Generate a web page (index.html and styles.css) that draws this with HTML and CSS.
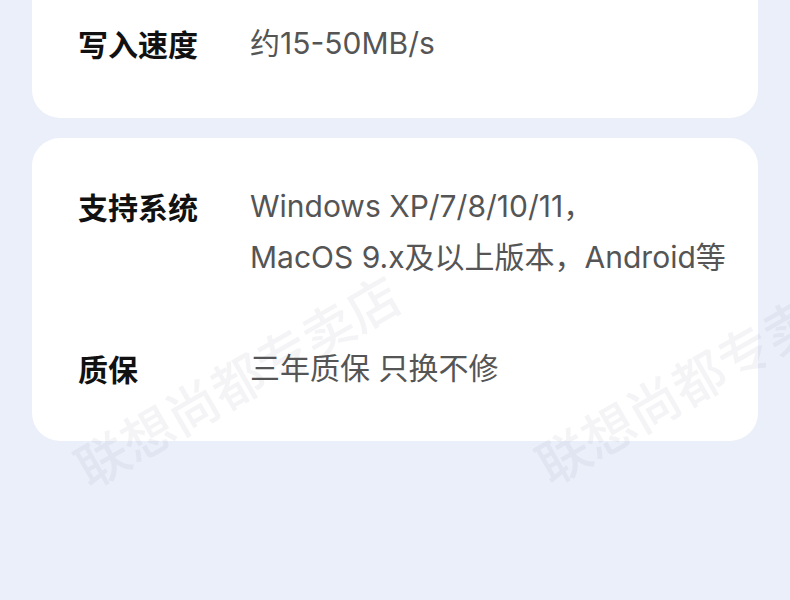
FILE: index.html
```html
<!DOCTYPE html>
<html lang="zh">
<head>
<meta charset="utf-8">
<link rel="stylesheet" href="styles.css">
</head>
<body>
<div class="page">
  <section class="card card-first">
    <div class="row">
      <div class="label">写入速度</div>
      <div class="value">约15-50MB/s</div>
    </div>
  </section>
  <section class="card">
    <div class="row">
      <div class="label">支持系统</div>
      <div class="value">Windows XP/7/8/10/11，<br>MacOS 9.x及以上版本，Android等</div>
    </div>
    <div class="row">
      <div class="label">质保</div>
      <div class="value">三年质保 只换不修</div>
    </div>
  </section>
  <div class="wm wm-1">联想尚都专卖店</div>
  <div class="wm wm-2">联想尚都专卖店</div>
</div>
</body>
</html>
```

FILE: styles.css
```css
html, body {
  margin: 0;
  padding: 0;
  background: #ebeffa;
}
.page {
  position: relative;
  width: 790px;
  height: 600px;
  overflow: hidden;
  padding: 0 32px;
  box-sizing: border-box;
  display: flex;
  flex-direction: column;
  gap: 20px;
  font-family: Inter, "Noto Sans CJK SC", sans-serif;
}
.card {
  background: #fff;
  border-radius: 28px;
  padding: 43px 0 47px 46px;
  display: flex;
  flex-direction: column;
  gap: 60px;
}
.card-first {
  border-radius: 0 0 28px 28px;
  padding-top: 18px;
  padding-bottom: 49px;
}
.row {
  display: flex;
  font-size: 30px;
  line-height: 51px;
}
.label {
  width: 172px;
  flex: none;
  color: #111;
  font-weight: 700;
  font-family: "Noto Sans CJK SC", sans-serif;
}
.value {
  color: #555;
}
.wm {
  position: absolute;
  font-family: "Noto Sans CJK SC", sans-serif;
  font-size: 52px;
  font-weight: 500;
  color: rgba(60, 70, 100, 0.06);
  white-space: nowrap;
  transform: rotate(-30deg);
  transform-origin: left bottom;
  pointer-events: none;
  line-height: 1;
}
.wm-1 { left: 92px; top: 441px; }
.wm-2 { left: 553px; top: 438px; }
```
